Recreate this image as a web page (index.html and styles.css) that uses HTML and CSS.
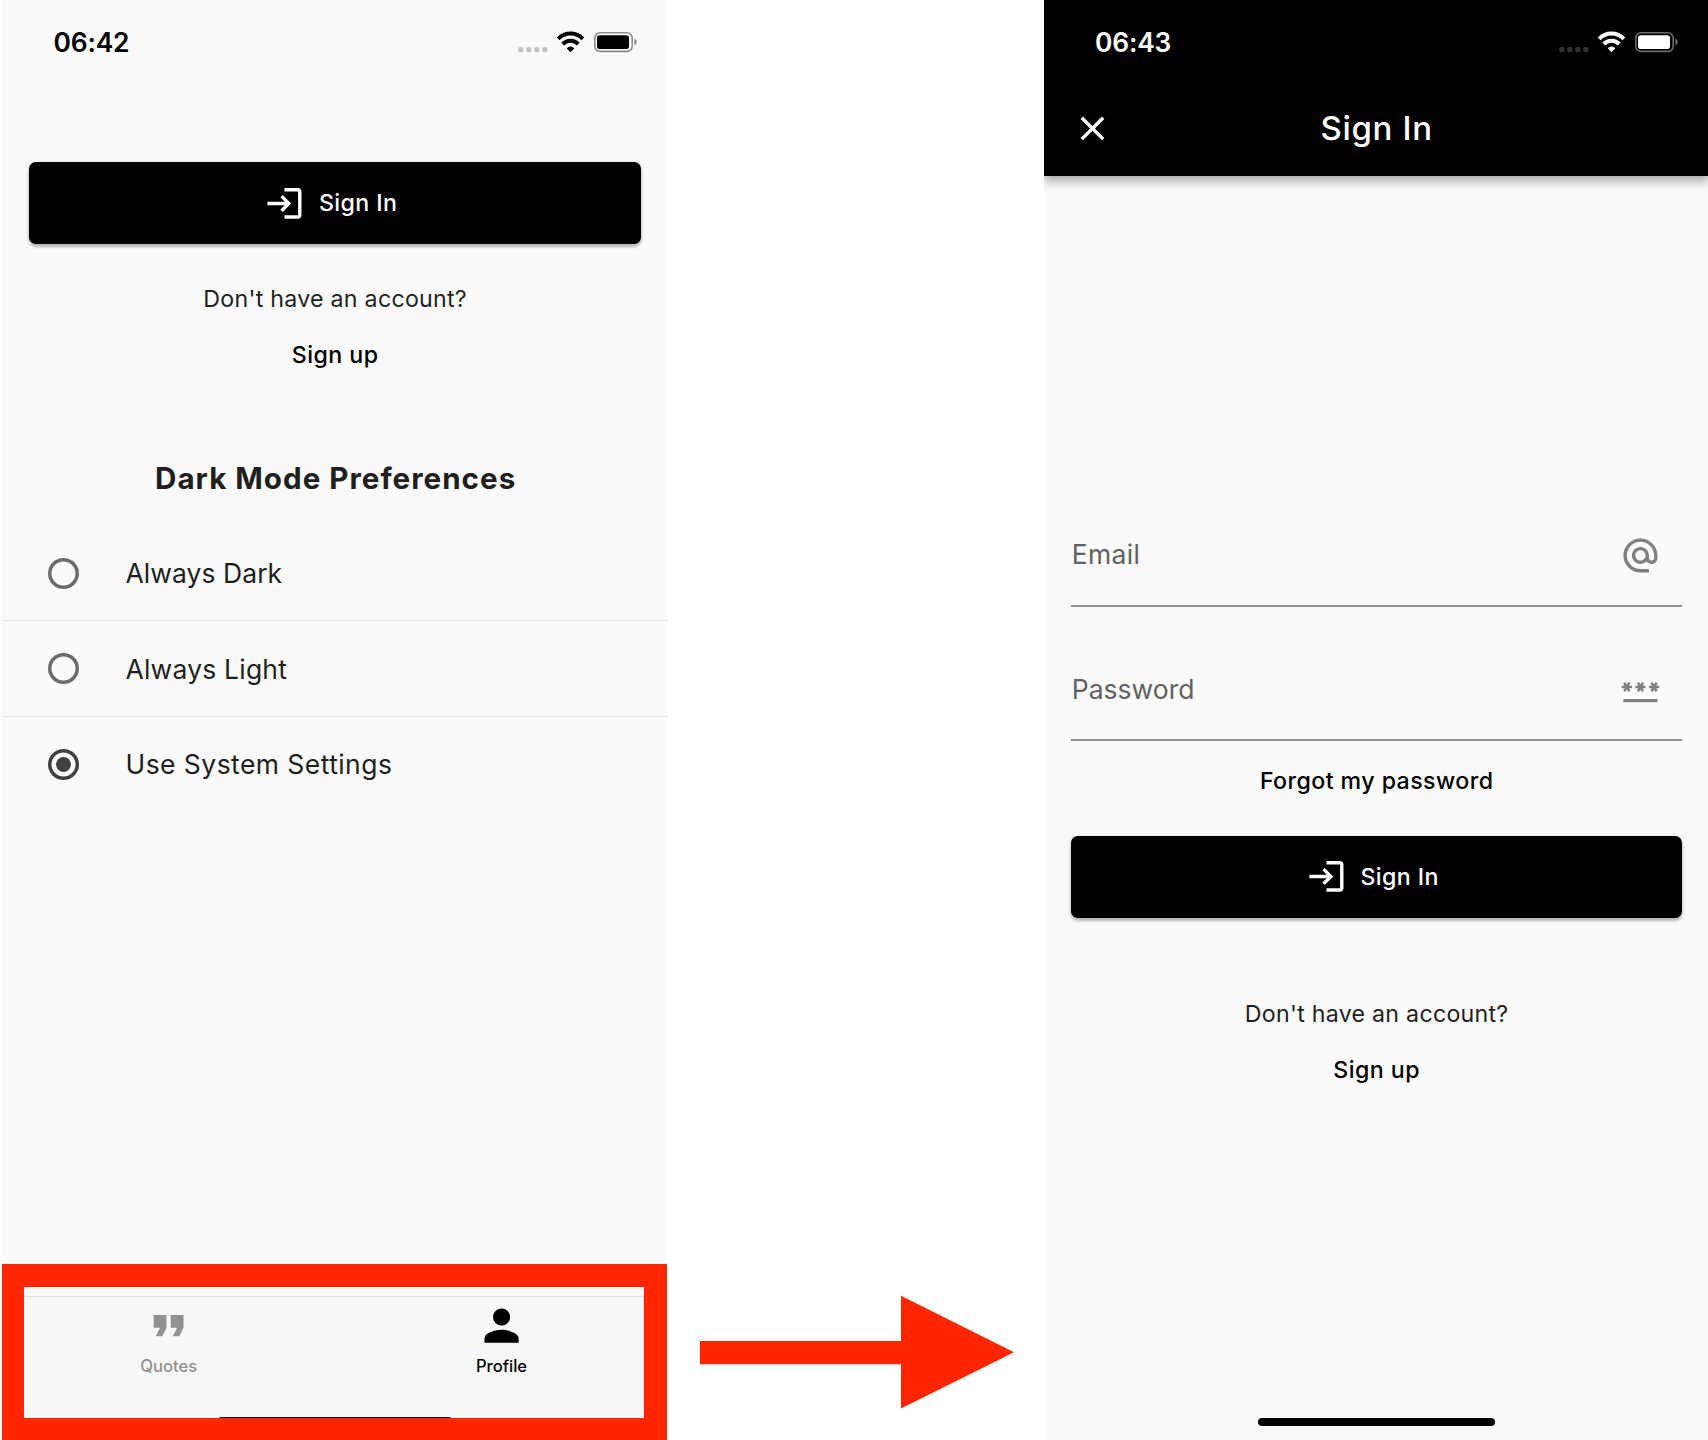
FILE: index.html
```html
<!DOCTYPE html>
<html lang="en">
<head>
<meta charset="utf-8">
<title>Sign In flow</title>
<link rel="stylesheet" href="styles.css">
</head>
<body>
<svg class="defs" width="0" height="0" aria-hidden="true">
  <symbol id="status" viewBox="0 0 120 22">
    <g class="dots"><rect x="0.2" y="16" width="5.2" height="5.2" rx="1.6"/><rect x="8.2" y="16" width="5.2" height="5.2" rx="1.6"/><rect x="16.2" y="16" width="5.2" height="5.2" rx="1.6"/><rect x="24.2" y="16" width="5.2" height="5.2" rx="1.6"/></g>
    <g fill="none" stroke="currentColor" stroke-width="4"><path d="M40.200 7.800a17.200 17.200 0 0 1 24.600 0"/><path d="M44.700 13a11 11 0 0 1 15.600 0"/></g>
    <path fill="currentColor" d="M48.600 17.200a5.900 5.900 0 0 1 7.800 0L52.500 21.300z"/>
    <rect class="shell" x="76.800" y="1.800" width="37.400" height="18.600" rx="5.200" fill="none" stroke-width="1.600"/>
    <rect x="79" y="4.200" width="32" height="13.800" rx="2.800" fill="currentColor"/>
    <path class="nub" d="M116.300 7.800c3.200 1 3.200 5.700 0 6.700z"/>
  </symbol>
  <symbol id="login" viewBox="0 0 24 24"><path fill="currentColor" d="M11 7 9.600 8.400l2.600 2.600H2v2h10.200l-2.600 2.600L11 17l5-5-5-5zm9 12h-8v2h8c1.100 0 2-.9 2-2V5c0-1.100-.9-2-2-2h-8v2h8v14z"/></symbol>
</svg>

<main class="stage">
  <section class="phone">
    <header class="status light"><span class="time">06:42</span><svg class="status-icons"><use href="#status"/></svg></header>
    <button class="signin first"><svg class="icon"><use href="#login"/></svg><span>Sign In</span></button>
    <p class="ask">Don't have an account?</p>
    <a class="link signup">Sign up</a>
    <h1 class="heading">Dark Mode Preferences</h1>
    <ul class="options">
      <li class="opt-dark"><span class="radio"></span><span>Always Dark</span></li>
      <li class="opt-light"><span class="radio"></span><span>Always Light</span></li>
      <li class="opt-system"><span class="radio checked"></span><span>Use System Settings</span></li>
    </ul>
    <nav class="tabs">
      <a class="tab"><svg viewBox="0 0 24 24"><path fill="currentColor" d="M6 17h3l2-4V7H5v6h3zm8 0h3l2-4V7h-6v6h3z"/></svg><span>Quotes</span></a>
      <a class="tab active"><svg viewBox="0 0 24 24"><path fill="currentColor" d="M12 12c2.210 0 4-1.790 4-4s-1.790-4-4-4-4 1.790-4 4 1.790 4 4 4zm0 2c-2.670 0-8 1.340-8 4v2h16v-2c0-2.660-5.330-4-8-4z"/></svg><span>Profile</span></a>
      <i class="home"></i>
    </nav>
    <div class="highlight"></div>
  </section>

  <div class="between"><svg class="arrow" viewBox="0 0 314 114"><path d="M0 46h201V.8l113 56.400L201 113.600V69.200H0z"/></svg></div>

  <section class="phone">
    <div class="appbar">
      <header class="status dark"><span class="time">06:43</span><svg class="status-icons"><use href="#status"/></svg></header>
      <div class="titlebar"><svg class="icon" viewBox="0 0 24 24"><path fill="currentColor" d="M19 6.410 17.590 5 12 10.590 6.410 5 5 6.410 10.590 12 5 17.590 6.410 19 12 13.410 17.590 19 19 17.590 13.410 12z"/></svg><h2>Sign In</h2></div>
    </div>
    <form class="form">
      <div class="field"><label class="email">Email</label><svg class="icon" viewBox="0 0 24 24"><path fill="currentColor" d="M12 2C6.480 2 2 6.480 2 12s4.480 10 10 10h5v-2h-5c-4.340 0-8-3.660-8-8s3.660-8 8-8 8 3.660 8 8v1.430c0 .79-.71 1.570-1.500 1.570s-1.500-.78-1.500-1.570V12c0-2.760-2.240-5-5-5s-5 2.240-5 5 2.240 5 5 5c1.380 0 2.640-.56 3.540-1.470.65.890 1.770 1.470 2.960 1.470 1.970 0 3.500-1.600 3.500-3.570V12c0-5.520-4.480-10-10-10zm0 13c-1.660 0-3-1.340-3-3s1.340-3 3-3 3 1.340 3 3-1.340 3-3 3z"/></svg></div>
      <div class="field second"><label>Password</label><svg class="icon" viewBox="0 0 24 24"><path fill="currentColor" d="M2 17h20v2H2v-2zm1.150-4.050L4 11.470l.85 1.480 1.300-.75-.85-1.480H7v-1.500H5.300l.85-1.470L4.850 7 4 8.470 3.150 7l-1.300.75.85 1.470H1v1.500h1.700l-.85 1.480 1.300.75zm6.700-.75l1.300.75.85-1.480.85 1.480 1.300-.75-.85-1.480H15v-1.500h-1.700l.85-1.470-1.300-.75L12 8.470 11.150 7l-1.300.75.85 1.470H9v1.500h1.700l-.85 1.480zM23 9.220h-1.700l.85-1.470-1.300-.75L20 8.470 19.150 7l-1.300.75.85 1.470H17v1.500h1.700l-.85 1.480 1.300.75.850-1.480.85 1.480 1.300-.75-.85-1.480H23v-1.500z"/></svg></div>
    </form>
    <a class="link forgot">Forgot my password</a>
    <button class="signin"><svg class="icon"><use href="#login"/></svg><span>Sign In</span></button>
    <p class="ask lower">Don't have an account?</p>
    <a class="link signup">Sign up</a>
    <i class="home"></i>
  </section>
</main>
</body>
</html>
```
FILE: styles.css
```css
* { box-sizing: border-box; }
body { margin: 0; background: #fff; font-family: Inter, "Liberation Sans", sans-serif; color: #1f1f1f; overflow: hidden; }
h1, h2, p, ul { margin: 0; padding: 0; }
.defs { position: absolute; }
.stage { display: grid; grid-template-columns: 665.5px 376px 665.5px; padding-left: 2.400px; width: 1709.400px; height: 1440px; }
.phone { position: relative; display: flex; flex-direction: column; background: #fafafa; height: 1440px; }
.icon { width: 40.900px; height: 40.900px; flex: none; display: block; }

.status { display: flex; justify-content: space-between; align-items: center; height: 85px; padding: 0 30.200px 0 51px; }
.time { font-size: 26.400px; font-weight: 600; line-height: 85px; letter-spacing: -.15px; }
.status-icons { width: 120px; height: 22px; display: block; margin-bottom: 2px; }
.light { color: #000; --dots: #c3c3c3; --shell: #8d8d8d; }
.dark { color: #fff; --dots: #333; --shell: #6b6b6b; }
.light .time, .dark .time { padding-top: .6px; }
.dots { fill: var(--dots); }
.shell { stroke: var(--shell); }
.nub { fill: var(--shell); }

.signin { display: flex; align-items: center; justify-content: center; gap: 13.600px; height: 81.700px; margin: 0 27px; padding: 0 8.500px 0 0; border: 0; border-radius: 6.800px; background: #000; color: #fff; font: 500 23.200px/82px Inter, sans-serif; letter-spacing: .4px; box-shadow: 0 3px 3px rgba(0,0,0,.2), 0 1px 5px rgba(0,0,0,.16); flex: none; }
.first { margin-top: 77.300px; }
.ask { height: 55.500px; margin-top: 28px; line-height: 55.500px; font-size: 23.200px; letter-spacing: .26px; text-align: center; }
.link { height: 56px; line-height: 56px; font-size: 23.200px; font-weight: 500; letter-spacing: .42px; text-align: center; color: #000; }
.heading { margin-top: 61px; padding-left: 1px; height: 68px; line-height: 68px; font-size: 29.600px; font-weight: 700; letter-spacing: 1px; text-align: center; }
.options { list-style: none; margin-top: 13.500px; }
.options li { display: flex; align-items: center; gap: 46.300px; height: 95.500px; padding-left: 45.800px; font-size: 26.500px; border-bottom: 1.500px solid #e6e6e6; }
.options li:last-child { border-bottom: 0; height: 94.500px; }
.opt-dark { letter-spacing: .05px; }
.opt-light { letter-spacing: .2px; }
.opt-system { letter-spacing: .44px; }
.radio { display: grid; place-items: center; width: 31px; height: 31px; color: #6b6b6b; box-shadow: inset 0 0 0 3.500px currentColor; border-radius: 50%; }
.checked { color: #404040; }
.checked::after { content: ""; width: 15.400px; height: 15.400px; border-radius: 50%; background: currentColor; }

.tabs { position: relative; display: grid; grid-template-columns: 1fr 1fr; margin-top: auto; height: 144px; border-top: 1.500px solid #dedede; background: #f8f8f8; }
.tab { display: flex; flex-direction: column; align-items: center; padding-top: 3px; color: #919191; font-size: 16.600px; font-weight: 500; line-height: 30px; }
.tab svg { width: 51.200px; height: 51.200px; display: block; }
.active { color: #000; }
.home { position: absolute; left: 214.500px; bottom: 14px; width: 236.500px; height: 8.500px; border-radius: 5px; background: #000; }
.tabs .home { bottom: 14.500px; }
.highlight { position: absolute; left: 0; top: 1264px; width: 664.300px; height: 176px; border: solid #ff2600; border-width: 23px 23px 22px 22px; }

.between { display: flex; align-items: flex-end; padding: 0 0 31.500px 32.200px; }
.arrow { width: 314px; height: 114px; display: block; fill: #ff2600; }

.appbar { height: 175.700px; background: #000; color: #fff; box-shadow: 0 5px 10px rgba(0,0,0,.35); clip-path: inset(0 0 -30px 0); }
.titlebar { display: grid; grid-template-columns: 96px 1fr 96px; align-items: center; height: 86px; }
.titlebar .icon { margin-left: 27.700px; }
h2 { font-size: 33px; font-weight: 500; line-height: 86px; letter-spacing: .65px; text-align: center; }
.form { margin: 329px 27.300px 0; }
.field { display: flex; align-items: center; justify-content: space-between; height: 102px; padding-right: 21.500px; border-bottom: 2px solid #929292; color: #808080; }
.field label { padding: 0 0 1px .6px; color: #616161; font-size: 26.500px; }
.field .icon { margin-top: 1.500px; }
.field .email { letter-spacing: .35px; }
.second { margin-top: 32.700px; }
.forgot { margin: 12px 0 26.500px; }
.lower { margin-top: 69px; }
.lower + .signup { margin-top: -.5px; }
```
